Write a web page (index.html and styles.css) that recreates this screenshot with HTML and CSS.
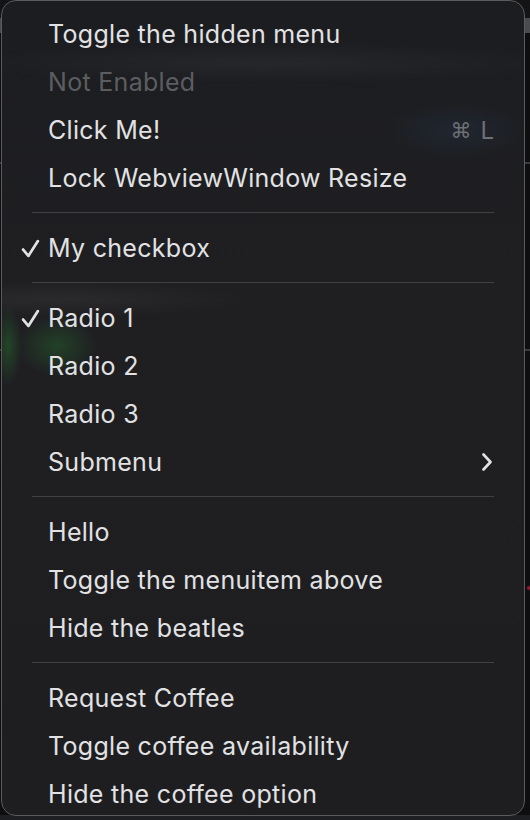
FILE: index.html
```html
<!DOCTYPE html>
<html>
<head>
<meta charset="utf-8">
<link rel="stylesheet" href="styles.css">
</head>
<body>
<div class="menu">
  <div class="item">Toggle the hidden menu</div>
  <div class="item disabled">Not Enabled</div>
  <div class="item"><span class="label">Click Me!</span><span class="shortcut"><span class="cmd">⌘</span><span>L</span></span></div>
  <div class="item">Lock WebviewWindow Resize</div>
  <div class="sep"></div>
  <div class="item"><svg class="check" viewBox="0 0 18 18"><path d="M2 10 L7 16 L16 2"/></svg>My checkbox</div>
  <div class="sep"></div>
  <div class="item"><svg class="check" viewBox="0 0 18 18"><path d="M2 10 L7 16 L16 2"/></svg>Radio 1</div>
  <div class="item">Radio 2</div>
  <div class="item">Radio 3</div>
  <div class="item"><span class="label">Submenu</span><svg class="chev" viewBox="0 0 10 18"><path d="M1.5 1.5 L8.5 9 L1.5 16.5"/></svg></div>
  <div class="sep"></div>
  <div class="item">Hello</div>
  <div class="item">Toggle the menuitem above</div>
  <div class="item">Hide the beatles</div>
  <div class="sep"></div>
  <div class="item">Request Coffee</div>
  <div class="item">Toggle coffee availability</div>
  <div class="item">Hide the coffee option</div>
</div>
</body>
</html>
```
FILE: styles.css
```css
html, body {
  margin: 0;
  padding: 0;
  background: #0e0e10;
}
body {
  width: 530px;
  height: 820px;
  overflow: hidden;
  background:
    radial-gradient(circle 3px at 529px 588px, #c0203a, transparent),
    linear-gradient(to bottom,
      #141416 0, #141416 18px,
      #4a4b4e 18px, #4a4b4e 33px,
      #0e0e10 33px, #0e0e10 162px,
      #3a3b3e 162px, #3a3b3e 164px,
      #0e0e10 164px, #0e0e10 349px,
      #3a3b3e 349px, #3a3b3e 351px,
      #0e0e10 351px, #0e0e10 815px,
      #1e1f23 815px);
  font-family: Inter, "Noto Sans", sans-serif;
}
.menu {
  box-sizing: border-box;
  margin-left: 1px;
  width: 524px;
  height: 816px;
  border: 1px solid #5b5b5e;
  border-radius: 15px;
  overflow: hidden;
  padding-top: 9px;
  position: relative;
  background:
    radial-gradient(ellipse 40px 30px at 55px 345px, rgba(40,130,50,0.35), transparent),
    radial-gradient(ellipse 14px 40px at 6px 345px, rgba(40,140,50,0.35), transparent),
    radial-gradient(ellipse 190px 18px at 60px 298px, rgba(255,255,255,0.05), transparent),
    radial-gradient(ellipse 300px 20px at 265px 62px, rgba(255,255,255,0.045), transparent),
    radial-gradient(ellipse 70px 28px at 455px 129px, rgba(40,70,110,0.22), transparent),
    linear-gradient(to bottom, #1c1d20, #1f1f22 40%, #1e1e21);
  color: #e2e2e4;
}
.item {
  height: 48px;
  display: flex;
  align-items: center;
  padding: 0 30px 0 46px;
  font-size: 25px;
  letter-spacing: 0.3px;
  position: relative;
  white-space: nowrap;
}
.item.disabled {
  color: #5c5d61;
}
.label {
  flex: 1;
}
.shortcut {
  display: flex;
  align-items: center;
  gap: 9px;
  color: #6d7075;
  font-size: 24px;
  letter-spacing: 0;
}
.cmd {
  font-family: "DejaVu Sans", sans-serif;
  font-size: 21px;
  position: relative;
  top: 1px;
}
.check {
  position: absolute;
  left: 19px;
  top: 15px;
  width: 19px;
  height: 19px;
  fill: none;
  stroke: #e2e2e4;
  stroke-width: 2.6;
  stroke-linecap: round;
  stroke-linejoin: round;
}
.chev {
  width: 10px;
  height: 18px;
  fill: none;
  stroke: #e2e2e4;
  stroke-width: 2.6;
  stroke-linecap: round;
  stroke-linejoin: round;
  margin-right: 2px;
}
.sep {
  height: 22px;
  display: flex;
  align-items: flex-start;
  margin: 0 30px;
}
.sep::before {
  content: "";
  display: block;
  width: 100%;
  height: 1px;
  margin-top: 10px;
  background: #404144;
}
```
